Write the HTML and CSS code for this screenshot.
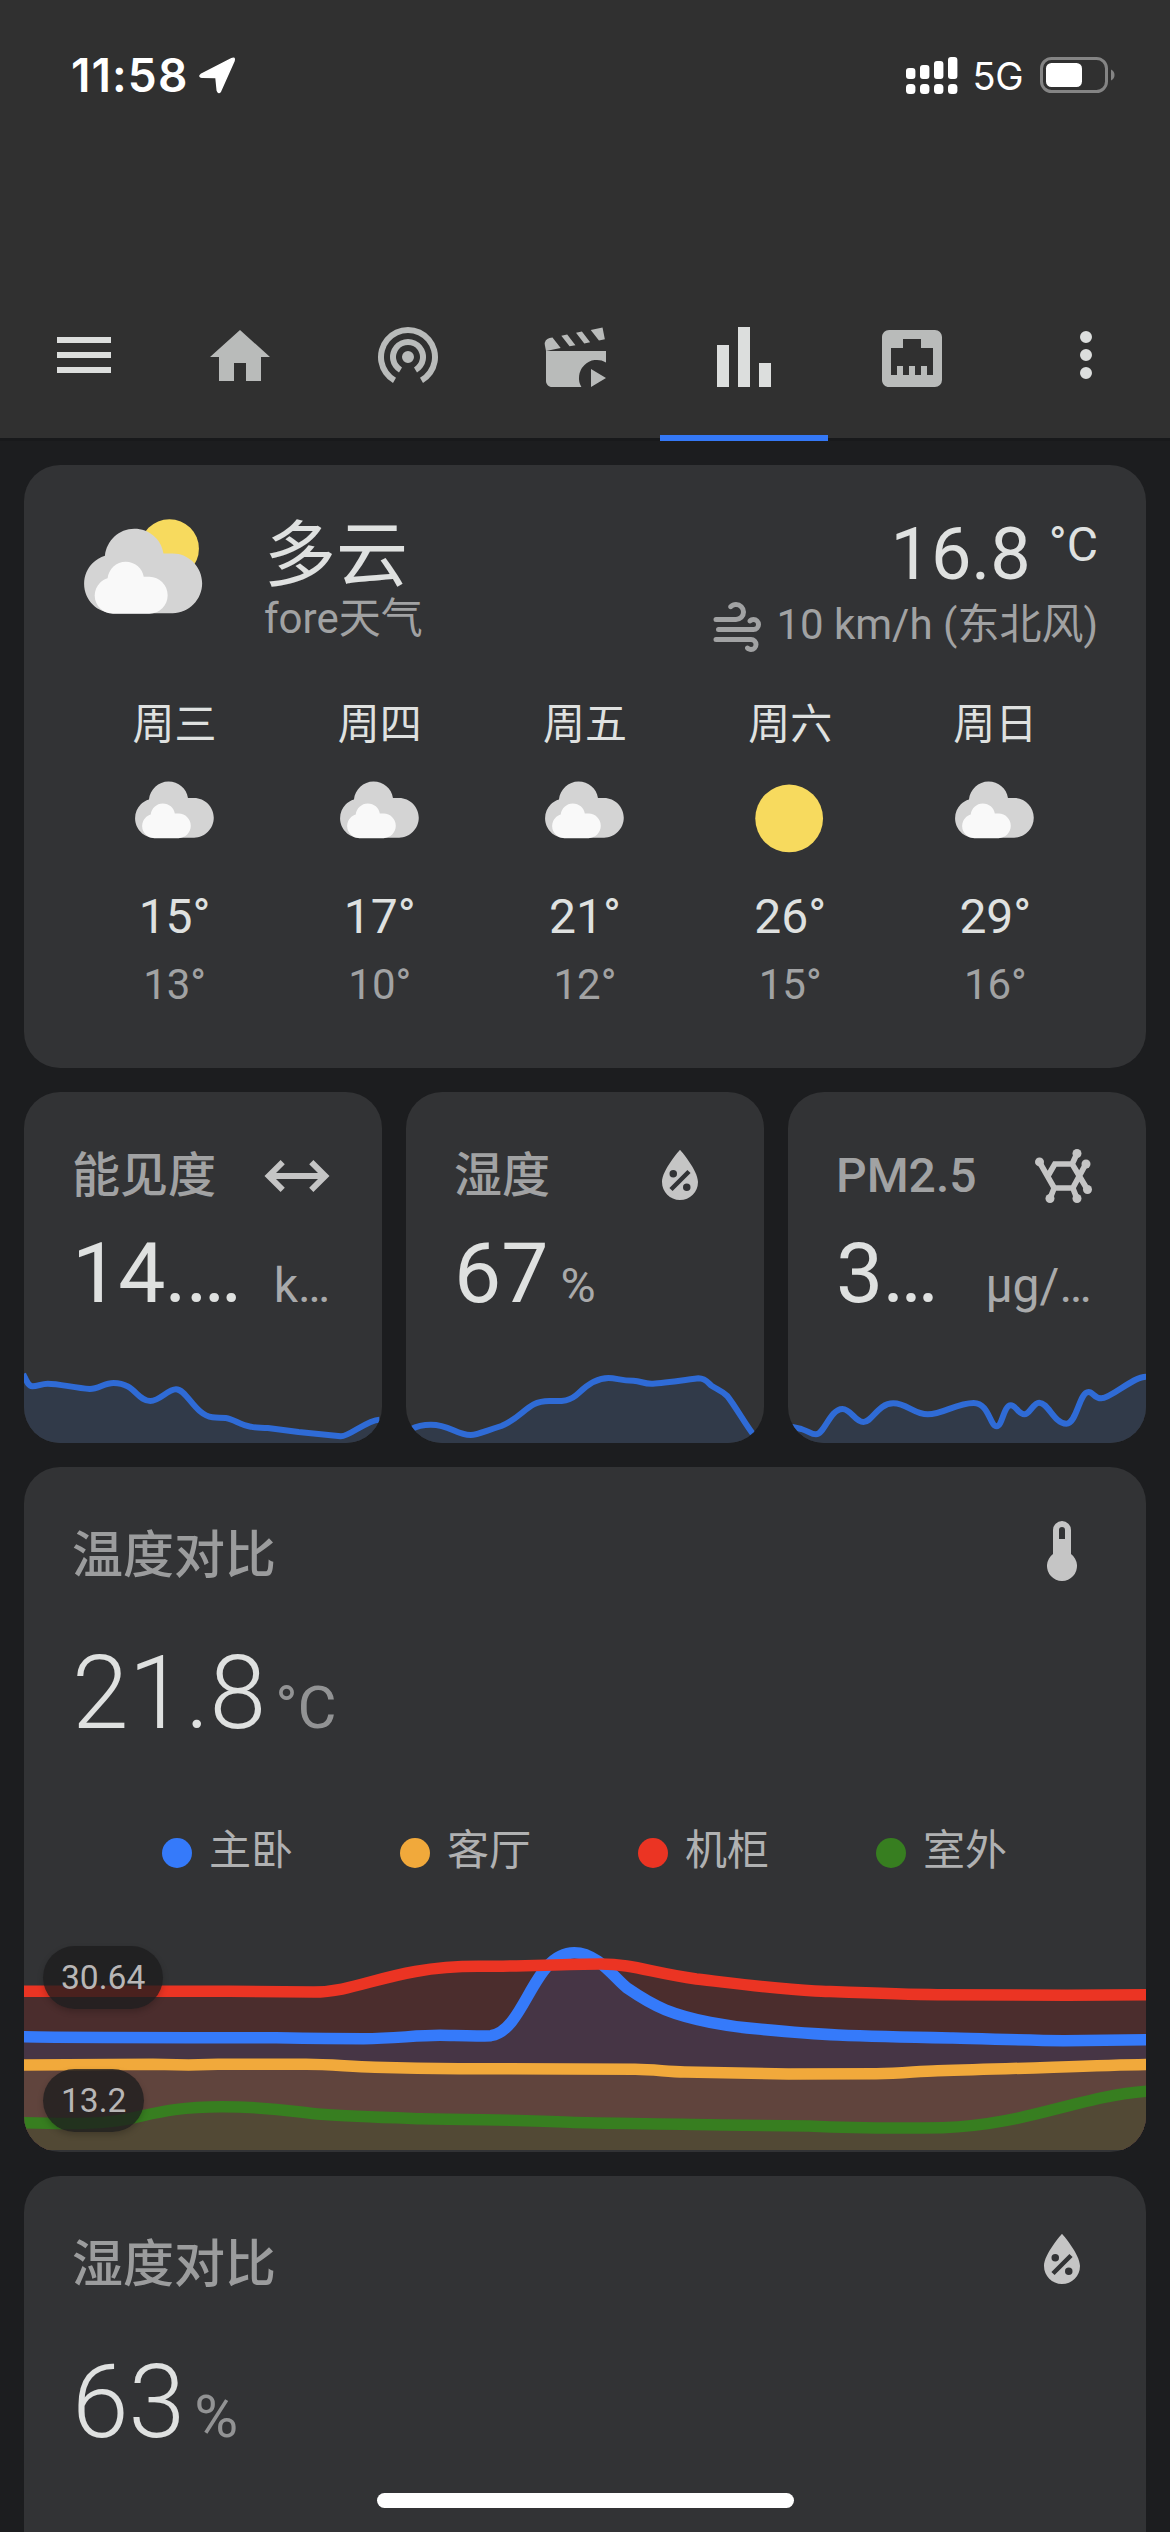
FILE: index.html
```html
<!DOCTYPE html>
<html lang="zh-CN">
<head>
<meta charset="utf-8">
<title>Home Assistant</title>
<link rel="stylesheet" href="styles.css">
</head>
<body>
<svg class="defs" width="0" height="0">
  <symbol id="cloud" viewBox="0 0 17 17">
    <path fill="#d4d4d4" d="m3.8863 5.035c-0.54892 0.16898-1.04 0.46637-1.4372 0.8636-0.63077 0.63041-1.0206 1.4933-1.0206 2.455 0 1.9251 1.5589 3.4682 3.4837 3.4682h6.9688c1.9251 0 3.484-1.5981 3.484-3.5232 0-1.9251-1.5589-3.5232-3.484-3.5232h-1.0834c-0.25294-1.6916-1.6986-2.9083-3.4463-2.9083-1.7995 0-3.2805 1.4153-3.465 3.1679"/>
    <path fill="#f9f9f9" d="m4.1996 7.6995c-0.33902 0.10407-0.64276 0.28787-0.88794 0.5334-0.39017 0.38982-0.63147 0.92322-0.63147 1.5176 0 1.1896 0.96414 2.1431 2.1537 2.1431h4.3071c1.1896 0 2.153-0.98742 2.153-2.1777 0-1.1896-0.96344-2.1777-2.153-2.1777h-0.66992c-0.15593-1.0449-1.0499-1.7974-2.1297-1.7974-1.112 0-2.0274 0.87524-2.1417 1.9586"/>
  </symbol>
  <symbol id="water-percent" viewBox="0 0 24 24">
    <path fill-rule="evenodd" d="M12,3.25C12,3.25 6,10 6,14C6,17.32 8.69,20 12,20A6,6 0 0,0 18,14C18,10 12,3.25 12,3.25M14.47,9.97L15.53,11.03L9.53,17.03L8.47,15.97M9.75,10A1.25,1.25 0 0,1 11,11.25A1.25,1.25 0 0,1 9.75,12.5A1.25,1.25 0 0,1 8.5,11.25A1.25,1.25 0 0,1 9.75,10M14.25,14.5A1.25,1.25 0 0,1 15.5,15.75A1.25,1.25 0 0,1 14.25,17A1.25,1.25 0 0,1 13,15.75A1.25,1.25 0 0,1 14.25,14.5Z"/>
  </symbol>
</svg>

<header class="header">
  <div class="status">
    <div class="status-left">
      <span class="clock">11:58</span>
      <svg class="location" viewBox="0 0 37 37"><path d="M2 17.5L32.6 1.6Q36.2 0 35 4L21.6 34Q19.6 37.4 18.3 33.6L17 20.6L3 20.2Q-.6 19.4 2 17.5Z"/></svg>
    </div>
    <div class="status-right">
      <svg class="signal" viewBox="0 0 52 37"><g>
        <rect x="0" y="11" width="9.4" height="11" rx="3"/><rect x="14" y="8" width="9.4" height="14" rx="3"/><rect x="28" y="4" width="9.4" height="18" rx="3"/><rect x="42" y="0" width="9.4" height="22" rx="3"/>
        <rect x="0" y="27" width="9.4" height="10" rx="3.5"/><rect x="14" y="27" width="9.4" height="10" rx="3.5"/><rect x="28" y="27" width="9.4" height="10" rx="3.5"/><rect x="42" y="27" width="9.4" height="10" rx="3.5"/>
      </g></svg>
      <span class="network">5G</span>
      <svg class="battery" viewBox="0 0 76 36"><rect x="1.5" y="1.5" width="65" height="33" rx="10" fill="none" stroke="#848484" stroke-width="3"/><rect x="6" y="6" width="36" height="24" rx="5.5"/><path fill="#848484" d="M71 12.5C75.7 14.5 75.7 21.5 71 23.5Z"/></svg>
    </div>
  </div>
  <nav class="toolbar">
    <svg class="icon menu" viewBox="0 0 24 24"><path d="M3,6H21V8H3V6M3,11H21V13H3V11M3,16H21V18H3V16Z"/></svg>
    <div class="tabs">
      <div class="tab"><svg class="icon" viewBox="0 0 24 24"><path d="M10,20V14H14V20H19V12H22L12,3L2,12H5V20H10Z"/></svg></div>
      <div class="tab"><svg class="icon" viewBox="0 0 24 24"><path d="M7 20.66A10 10 0 1 1 17 20.66L16 18.93A8 8 0 1 0 8 18.93ZM9 17.2A6 6 0 1 1 15 17.2L14 15.46A4 4 0 1 0 10 15.46ZM12 10A2 2 0 1 0 12 14A2 2 0 1 0 12 10Z"/></svg></div>
      <div class="tab"><svg class="icon" viewBox="0 0 24 24"><path d="M20.84 2.18L16.91 2.96L19.65 6.5L21.62 6.1L20.84 2.18M13.97 3.54L12 3.93L14.75 7.46L16.71 7.07L13.97 3.54M9.07 4.5L7.1 4.91L9.85 8.44L11.81 8.05L9.07 4.5M4.16 5.5L3.18 5.69A2 2 0 0 0 1.61 8.04L2 10L6.9 9.03L4.16 5.5M2 10V20C2 21.11 2.9 22 4 22H13.8A6 6 0 0 1 22 13.8V10ZM17 16V22L22 19Z"/></svg></div>
      <div class="tab active"><svg class="icon" viewBox="0 0 24 24"><path d="M3,22V8H7V22H3M10,22V2H14V22H10M17,22V14H21V22H17Z"/></svg></div>
      <div class="tab"><svg class="icon" viewBox="0 0 24 24"><path d="M7,15H9V18H11V15H13V18H15V15H17V18H19V9H15V6H9V9H5V18H7V15M4.38,3H19.63C20.94,3 22,4.06 22,5.38V19.63A2.37,2.37 0 0,1 19.63,22H4.38C3.06,22 2,20.94 2,19.63V5.38C2,4.06 3.06,3 4.38,3Z"/></svg></div>
    </div>
    <svg class="icon more" viewBox="0 0 24 24"><path d="M12,16A2,2 0 0,1 14,18A2,2 0 0,1 12,20A2,2 0 0,1 10,18A2,2 0 0,1 12,16M12,10A2,2 0 0,1 14,12A2,2 0 0,1 12,14A2,2 0 0,1 10,12A2,2 0 0,1 12,10M12,4A2,2 0 0,1 14,6A2,2 0 0,1 12,8A2,2 0 0,1 10,6A2,2 0 0,1 12,4Z"/></svg>
  </nav>
</header>

<main class="view">
  <section class="card weather">
    <div class="now">
      <svg class="now-icon" viewBox="0 0 17 17"><circle cx="11.5" cy="4.21" r="3.484" fill="#f7da5e"/><use href="#cloud"/></svg>
      <div class="now-name">
        <div class="now-state">多云</div>
        <div class="now-place">fore天气</div>
      </div>
      <div class="now-values">
        <div class="now-temp"><span>16.8</span><span class="now-unit">°C</span></div>
        <div class="now-wind">
          <svg class="wind" viewBox="0 0 24 24"><path d="M4,10A1,1 0 0,1 3,9A1,1 0 0,1 4,8H12A2,2 0 0,0 14,6A2,2 0 0,0 12,4C11.45,4 10.95,4.22 10.59,4.59C10.2,5 9.56,5 9.17,4.59C8.78,4.2 8.78,3.56 9.17,3.17C9.9,2.45 10.9,2 12,2A4,4 0 0,1 16,6A4,4 0 0,1 12,10H4M19,12A1,1 0 0,0 20,11A1,1 0 0,0 19,10C18.72,10 18.47,10.11 18.29,10.29C17.9,10.68 17.27,10.68 16.88,10.29C16.5,9.9 16.5,9.27 16.88,8.88C17.42,8.34 18.17,8 19,8A3,3 0 0,1 22,11A3,3 0 0,1 19,14H5A1,1 0 0,1 4,13A1,1 0 0,1 5,12H19M18,18H4A1,1 0 0,1 3,17A1,1 0 0,1 4,16H18A3,3 0 0,1 21,19A3,3 0 0,1 18,22C17.17,22 16.42,21.66 15.88,21.12C15.5,20.73 15.5,20.1 15.88,19.71C16.27,19.32 16.9,19.32 17.29,19.71C17.47,19.89 17.72,20 18,20A1,1 0 0,0 19,19A1,1 0 0,0 18,18Z"/></svg>
          <span>10 km/h (东北风)</span>
        </div>
      </div>
    </div>
    <div class="forecast">
      <div class="day"><div class="day-name">周三</div><svg class="day-icon"><use href="#cloud"/></svg><div class="high">15°</div><div class="low">13°</div></div>
      <div class="day"><div class="day-name">周四</div><svg class="day-icon"><use href="#cloud"/></svg><div class="high">17°</div><div class="low">10°</div></div>
      <div class="day"><div class="day-name">周五</div><svg class="day-icon"><use href="#cloud"/></svg><div class="high">21°</div><div class="low">12°</div></div>
      <div class="day"><div class="day-name">周六</div><svg class="day-icon" viewBox="0 0 17 17"><circle cx="8.35" cy="8.4" r="6" fill="#f7da5e"/></svg><div class="high">26°</div><div class="low">15°</div></div>
      <div class="day"><div class="day-name">周日</div><svg class="day-icon"><use href="#cloud"/></svg><div class="high">29°</div><div class="low">16°</div></div>
    </div>
  </section>

  <div class="sensors">
    <section class="card sensor">
      <div class="sensor-head"><span>能见度</span><svg class="icon" viewBox="0 0 72 72"><path d="M2.5 36L18.6 20L22.8 24.2L14 33H56L47.2 24.2L51.4 20L67.5 36L51.4 52L47.2 47.8L56 39H14L22.8 47.8L18.6 52Z"/></svg></div>
      <div class="sensor-value wide"><span class="number">14.…</span><span class="unit">k…</span></div>
      <svg class="spark" viewBox="0 0 935 219" preserveAspectRatio="none">
        <path class="spark-fill" d="M-2,12C6,30 10,48 22,49C36,49 45,41 62,41C90,41 130,53 172,57C195,57 210,39 234,39C290,39 295,93 330,93C355,93 375,58 397,58C425,58 447,136 492,142C505,144 515,142 527,144C550,148 565,166 592,170C605,174 620,172 637,174L717,186L827,199C850,200 895,150 935,148V219H-2Z"/>
        <path class="spark-line" d="M-2,12C6,30 10,48 22,49C36,49 45,41 62,41C90,41 130,53 172,57C195,57 210,39 234,39C290,39 295,93 330,93C355,93 375,58 397,58C425,58 447,136 492,142C505,144 515,142 527,144C550,148 565,166 592,170C605,174 620,172 637,174L717,186L827,199C850,200 895,150 928,149"/>
      </svg>
    </section>
    <section class="card sensor">
      <div class="sensor-head"><span>湿度</span><svg class="icon"><use href="#water-percent"/></svg></div>
      <div class="sensor-value"><span class="number">67</span><span class="unit">%</span></div>
      <svg class="spark" viewBox="0 0 935 219" preserveAspectRatio="none">
        <path class="spark-fill" d="M12,178C35,164 50,164 65,164C115,164 130,195 169,195C185,195 205,184 249,168C309,140 315,93 374,93C400,93 425,98 450,70C475,42 500,24 529,24C550,24 560,32 594,32C615,34 620,41 641,41C660,41 700,34 764,25C785,25 790,42 799,48C815,60 825,62 839,78C860,108 890,170 909,196V219H12Z"/>
        <path class="spark-line" d="M12,178C35,164 50,164 65,164C115,164 130,195 169,195C185,195 205,184 249,168C309,140 315,93 374,93C400,93 425,98 450,70C475,42 500,24 529,24C550,24 560,32 594,32C615,34 620,41 641,41C660,41 700,34 764,25C785,25 790,42 799,48C815,60 825,62 839,78C860,108 890,170 909,196"/>
      </svg>
    </section>
    <section class="card sensor">
      <div class="sensor-head"><span>PM2.5</span><svg class="icon" viewBox="0 0 24 24"><path fill="none" stroke="currentColor" stroke-width="1.9" d="M4.4 7.2L9.4 16H15.6L20 7.9M20.5 16.6L15.4 8H9.6L7.3 12M15.4 8L17 4.5M9.4 16L8 19.5M15.6 16L17 19.5"/><circle cx="4.5" cy="7.3" r="1.5"/><circle cx="17" cy="4.5" r="1.5"/><circle cx="20" cy="8" r="1.5"/><circle cx="8" cy="19.5" r="1.5"/><circle cx="17" cy="19.5" r="1.5"/><circle cx="20.5" cy="16.5" r="1.5"/></svg></div>
      <div class="sensor-value wider"><span class="number">3…</span><span class="unit">µg/…</span></div>
      <svg class="spark" viewBox="0 0 935 219" preserveAspectRatio="none">
        <path class="spark-fill" d="M8,170L35,177C55,184 60,193 73,193C95,193 110,117 142,117C165,117 175,156 197,156C220,156 235,100 275,100C310,100 330,133 365,133C405,133 440,99 485,99C525,99 527,169 545,169C560,169 563,106 582,106C595,106 602,133 617,133C632,133 640,98 656,98C680,98 695,161 727,161C755,161 760,66 785,66C797,66 800,85 818,85C845,85 900,20 935,20V219H8Z"/>
        <path class="spark-line" d="M8,170L35,177C55,184 60,193 73,193C95,193 110,117 142,117C165,117 175,156 197,156C220,156 235,100 275,100C310,100 330,133 365,133C405,133 440,99 485,99C525,99 527,169 545,169C560,169 563,106 582,106C595,106 602,133 617,133C632,133 640,98 656,98C680,98 695,161 727,161C755,161 760,66 785,66C797,66 800,85 818,85C845,85 900,20 935,20"/>
      </svg>
    </section>
  </div>

  <section class="card compare">
    <div class="compare-head"><span>温度对比</span><svg class="icon" viewBox="0 0 24 24"><path fill-rule="evenodd" d="M15 13V5A3 3 0 0 0 9 5V13A5 5 0 1 0 15 13M12 4A1 1 0 0 1 13 5V8H11V5A1 1 0 0 1 12 4Z"/></svg></div>
    <div class="compare-value"><span>21.8</span><span class="unit">°C</span></div>
    <div class="legend">
      <div class="legend-item"><i class="dot blue"></i>主卧</div>
      <div class="legend-item"><i class="dot orange"></i>客厅</div>
      <div class="legend-item"><i class="dot red"></i>机柜</div>
      <div class="legend-item"><i class="dot green"></i>室外</div>
    </div>
    <div class="chart">
      <svg class="chart-svg" viewBox="0 0 2932 630" preserveAspectRatio="none">
        <path fill="#4b2d2d" d="M0,148H537C640,149 720,150 757,150C880,150 960,73 1187,73C1300,74 1400,66 1507,66C1590,66 1640,92 1757,111C1850,123 1960,141 2067,147C2200,153 2300,158 2387,158L2727,160L2932,158V624H0Z"/>
        <path fill="#463545" d="M0,284C100,287 300,287 637,287C750,289 800,290 887,290C970,290 1020,280 1087,280C1140,281 1180,283 1220,281C1310,265 1330,32 1438,32C1500,32 1545,112 1577,139C1610,165 1640,187 1677,204C1740,233 1840,255 1927,262C2000,270 2060,276 2127,279C2230,284 2330,286 2427,288C2520,290 2620,296 2717,296L2932,293V624H0Z"/>
        <path fill="#60443d" d="M0,369L337,367L430,369L507,367H737C800,367 850,374 917,376C1000,379 1100,380 1137,380L1597,382C1650,383 1680,389 1727,390L1997,396L2227,395C2300,393 2340,387 2387,386C2600,381 2800,369 2932,367V624H0Z"/>
        <path fill="#524935" d="M0,542C70,545 110,546 160,544C300,542 330,494 517,494C640,494 700,508 777,517C850,524 950,527 1037,530C1200,535 1300,532 1427,541C1500,545 1700,545 1827,549L2050,552C2200,560 2300,559 2400,557C2620,550 2760,460 2932,448V624H0Z"/>
        <path class="line" stroke="#357afa" d="M-9,284C100,287 300,287 637,287C750,289 800,290 887,290C970,290 1020,280 1087,280C1140,281 1180,283 1220,281C1310,265 1330,32 1438,32C1500,32 1545,112 1577,139C1610,165 1640,187 1677,204C1740,233 1840,255 1927,262C2000,270 2060,276 2127,279C2230,284 2330,286 2427,288C2520,290 2620,296 2717,296L2942,293"/>
        <path class="line" stroke="#f1a93b" d="M-9,369L337,367L430,369L507,367H737C800,367 850,374 917,376C1000,379 1100,380 1137,380L1597,382C1650,383 1680,389 1727,390L1997,396L2227,395C2300,393 2340,387 2387,386C2600,381 2800,369 2942,367"/>
        <path class="line" stroke="#eb3423" d="M-9,148H537C640,149 720,150 757,150C880,150 960,73 1187,73C1300,74 1400,66 1507,66C1590,66 1640,92 1757,111C1850,123 1960,141 2067,147C2200,153 2300,158 2387,158L2727,160L2942,158"/>
        <path class="line" stroke="#377e20" d="M-9,542C70,545 110,546 160,544C300,542 330,494 517,494C640,494 700,508 777,517C850,524 950,527 1037,530C1200,535 1300,532 1427,541C1500,545 1700,545 1827,549L2050,552C2200,560 2300,559 2400,557C2620,550 2760,460 2942,447"/>
      </svg>
      <span class="bound max">30.64</span>
      <span class="bound min">13.2</span>
    </div>
  </section>

  <section class="card compare cut">
    <div class="compare-head"><span>湿度对比</span><svg class="icon"><use href="#water-percent"/></svg></div>
    <div class="compare-value"><span>63</span><span class="unit">%</span></div>
  </section>
</main>
<div class="home-bar"></div>
</body>
</html>
```
FILE: styles.css
```css
* { box-sizing: border-box; }
body {
  margin: 0;
  width: 1170px;
  height: 2532px;
  overflow: hidden;
  position: relative;
  background: #1c1d1f;
  color: #dfe1e0;
  font-family: Roboto, "Noto Sans CJK SC", sans-serif;
}
svg { display: block; fill: currentColor; flex: none; }
.defs { position: absolute; }
.icon { width: 72px; height: 72px; }

.header {
  height: 438px;
  display: flex;
  flex-direction: column;
  justify-content: space-between;
  background: #303030;
  box-shadow: 0 3px 0 #18191b;
}
.status {
  height: 150px;
  padding: 0 54px 0 71px;
  display: flex;
  align-items: center;
  justify-content: space-between;
  color: #fff;
  font-family: Inter, sans-serif;
}
.status-left, .status-right { display: flex; align-items: center; }
.status-left { gap: 11px; }
.clock { font-size: 46px; font-weight: 600; line-height: 56px; letter-spacing: 1.1px; }
.location { width: 37px; height: 37px; stroke: currentColor; stroke-width: 1.5px; stroke-linejoin: round; overflow: visible; }
.signal { width: 52px; height: 37px; }
.network { margin: 1px 17px 0 15px; font-size: 38px; font-weight: 400; line-height: 46px; letter-spacing: -0.5px; }
.battery { width: 76px; height: 36px; }

.toolbar { height: 168px; padding: 2px 48px 0; display: flex; align-items: center; color: #dcdedd; }
.tabs { display: flex; align-self: stretch; margin: 0 auto 0 36px; color: #b9bbba; }
.tab { width: 168px; padding-top: 4px; display: flex; align-items: center; justify-content: center; position: relative; }
.tab.active { color: #dcdedd; }
.tab.active::after { content: ""; position: absolute; left: 0; right: 0; bottom: -3px; height: 6px; background: #3478f6; }

.view { padding: 27px 24px 0; display: flex; flex-direction: column; gap: 24px; }
.card { background: #323335; border-radius: 36px; overflow: hidden; flex: none; }

.weather { height: 603px; padding: 48px; }
.now { display: flex; gap: 48px; height: 144px; }
.now-icon { width: 144px; height: 144px; }
.now-state { padding-top: 2px; font-size: 72px; line-height: 82px; }
.now-place { font-size: 42px; line-height: 44px; color: #a1a2a3; }
.now-values { margin-left: auto; display: flex; flex-direction: column; align-items: flex-end; }
.now-temp { display: flex; font-size: 72px; line-height: 84px; }
.now-unit { margin-left: 18px; font-size: 48px; line-height: 64px; }
.now-wind { display: flex; gap: 10px; font-size: 42px; line-height: 56px; color: #a1a2a3; }
.wind { width: 60px; height: 60px; }

.forecast { margin-top: 44px; display: grid; grid-template-columns: repeat(5, 205.2px); text-align: center; }
.day { display: flex; flex-direction: column; align-items: center; }
.day-name { font-size: 42px; line-height: 48px; }
.day-icon { width: 96px; height: 96px; margin: 22px 0 21px; }
.high { font-size: 48px; line-height: 57px; }
.low { margin-top: 15px; font-size: 42px; line-height: 50px; color: #a1a2a3; }

.sensors { display: grid; grid-template-columns: repeat(3, 1fr); gap: 24px; }
.sensor { height: 351px; display: flex; flex-direction: column; }
.sensor-head { padding: 48px 48px 0; display: flex; justify-content: space-between; font-size: 48px; font-weight: 500; line-height: 71px; color: #a1a2a3; }
.sensor-head .icon, .compare-head .icon { color: #c5c5c5; }
.sensor-value { padding: 0 48px; margin-top: 20px; display: flex; align-items: baseline; gap: 12px; white-space: nowrap; line-height: 84px; }
.sensor-value.wide { gap: 33px; }
.sensor-value.wider { gap: 48px; }
.number { font-size: 84px; }
.wide .number, .wider .number { letter-spacing: -1px; }
.sensor-value .unit { font-size: 48px; line-height: 56px; color: #a9aaab; }
.spark { width: 100%; height: 73px; margin-top: auto; }
.spark-fill { fill: #313a49; }
.spark-line { fill: none; stroke: #2f6bd6; stroke-width: 6px; vector-effect: non-scaling-stroke; stroke-linejoin: round; }

.compare { height: 685px; display: flex; flex-direction: column; }
.compare.cut { height: 356px; border-bottom-left-radius: 0; border-bottom-right-radius: 0; }
.compare-head { height: 120px; padding: 48px 48px 0; display: flex; justify-content: space-between; font-size: 51px; font-weight: 500; line-height: 81px; color: #9b9c9d; }
.compare-value { padding: 0 48px; margin-top: 55px; display: flex; align-items: baseline; gap: 9px; font-size: 102px; font-weight: 300; line-height: 102px; }
.compare-value .unit { font-size: 60px; font-weight: 400; line-height: 60px; color: #929394; }
.legend { margin-top: 83px; padding-left: 138px; display: flex; gap: 107px; font-size: 42px; line-height: 48px; color: #b0b1b2; }
.legend-item { display: flex; align-items: center; gap: 17px; }
.dot { width: 30px; height: 30px; margin-top: 4px; border-radius: 50%; }
.blue { background: #357afa; }
.orange { background: #f1a93b; }
.red { background: #eb3423; }
.green { background: #377e20; }
.chart { position: relative; margin-top: auto; }
.chart-svg { width: 100%; height: 210px; }
.line { fill: none; stroke-width: 11.5px; vector-effect: non-scaling-stroke; }
.bound {
  position: absolute;
  left: 19px;
  padding: 0 18px;
  font-size: 33.6px;
  line-height: 63px;
  border-radius: 32px;
  color: #b8b6b6;
  background: rgba(28, 28, 30, 0.78);
  box-shadow: 0 3px 6px rgba(0, 0, 0, 0.2);
}
.max { top: 4px; }
.min { top: 127px; }

.home-bar { position: absolute; left: 377px; bottom: 24px; width: 417px; height: 15px; border-radius: 8px; background: #fff; }
```
